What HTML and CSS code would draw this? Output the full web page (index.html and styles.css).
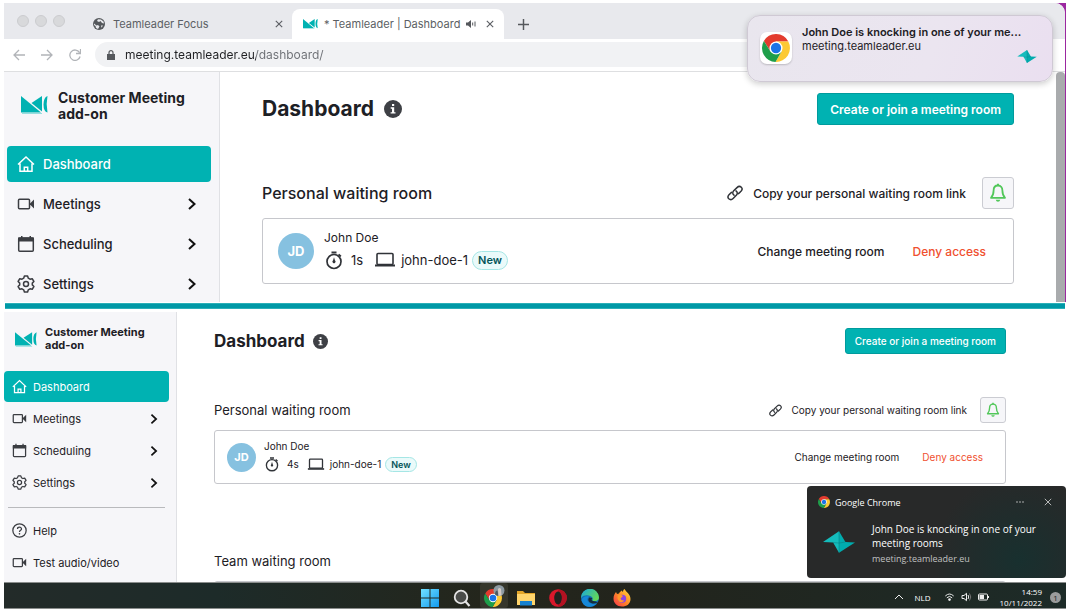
FILE: index.html
```html
<!DOCTYPE html>
<html lang="en">
<head>
<meta charset="utf-8">
<title>Teamleader | Dashboard</title>
<link rel="stylesheet" href="styles.css">
</head>
<body>
<svg class="sprite" aria-hidden="true">
  <symbol id="logo" viewBox="0 0 27 18">
    <path d="M0 0 20 16.500H0Z" fill="#00b2b2"/><path d="M10.500 7 21 0V15.500Z" fill="#00b2b2"/>
    <path d="M1 17.500H21" stroke="#7fd8d8" stroke-width=".8"/>
    <path d="M26.500 0Q24.800 8.500 26.500 16.500Q22.500 15.500 22.500 8.500Q22.500 1.500 26.500 0Z" fill="#00b2b2"/>
  </symbol>
  <symbol id="home" viewBox="0 0 18 18">
    <path d="M1 9.500 9 2l8 7.500M3 8.500V16.300H15V8.500M7.300 16V12.200H10.700V16" fill="none" stroke="currentColor" stroke-width="1.500"/>
  </symbol>
  <symbol id="camera" viewBox="0 0 18 18">
    <rect x="1.500" y="4.200" width="11" height="9.600" rx="1" fill="none" stroke="currentColor" stroke-width="1.500"/>
    <path d="M13 8.500 17 4.600V13.400L13 9.500Z" fill="currentColor"/>
  </symbol>
  <symbol id="calendar" viewBox="0 0 18 18">
    <rect x="1.700" y="3" width="14.600" height="13.200" rx="1" fill="none" stroke="currentColor" stroke-width="1.500"/>
    <path d="M1 2.500H17V6.500H1ZM4 1H5.500V3H4ZM12.500 1H14V3H12.500Z" fill="currentColor"/>
  </symbol>
  <symbol id="gear" viewBox="0 0 18 18">
    <path d="M7.400 1H10.600L11.300 3.200 13 4.200 15.200 3.700 16.900 6.500 15.300 8.100V9.900L16.900 11.500 15.200 14.300 13 13.800 11.300 14.800 10.600 17H7.400L6.700 14.800 5 13.800 2.800 14.300 1.100 11.500 2.700 9.900V8.100L1.100 6.500 2.800 3.700 5 4.200 6.700 3.200Z" fill="none" stroke="currentColor" stroke-width="1.500" stroke-linejoin="round"/>
    <circle cx="9" cy="9" r="2.500" fill="none" stroke="currentColor" stroke-width="1.500"/>
  </symbol>
  <symbol id="help" viewBox="0 0 18 18">
    <circle cx="9" cy="9" r="8" fill="none" stroke="currentColor" stroke-width="1.500"/>
    <path d="M6.600 7.200C6.600 4.300 11.400 4.400 11.400 7.100 11.400 8.900 9 8.800 9 10.800" fill="none" stroke="currentColor" stroke-width="1.500"/>
    <circle cx="9" cy="13" r="1" fill="currentColor"/>
  </symbol>
  <symbol id="chevron" viewBox="0 0 10 14"><path d="M2 2 7.500 7 2 12" fill="none" stroke="#111" stroke-width="2"/></symbol>
  <symbol id="info" viewBox="0 0 18 18">
    <circle cx="9" cy="9" r="9" fill="#3e4045"/><path d="M6.700 7.300H10.200V12.200H11.500V13.600H6.600V12.200H8V8.700H6.700ZM8 4H10.200V6H8Z" fill="#fff"/>
  </symbol>
  <symbol id="link" viewBox="0 0 16 16">
    <g fill="none" stroke="#303338" stroke-width="1.500" stroke-linecap="round">
      <path d="M7 10.200C5.300 9 5.500 7 6.700 5.800L10 2.600C11.500 1.100 13.400 1.400 14.300 2.300 15.300 3.300 15.300 5 14 6.300L11.500 8.600"/>
      <path d="M9 5.900C10.700 7.200 10.600 9 9.300 10.300L6.100 13.500C4.600 15 2.800 14.600 1.800 13.700 .8 12.700 .8 11 2 9.700L4.500 7.400"/>
    </g>
  </symbol>
  <symbol id="bell" viewBox="0 0 18 20">
    <path d="M9 2.500C6 2.500 4.600 4.700 4.600 7.500 4.600 11.500 3.500 13.200 2 14.800H16C14.500 13.200 13.400 11.500 13.400 7.500 13.400 4.700 12 2.500 9 2.500Z" fill="none" stroke="#52c75a" stroke-width="1.800" stroke-linejoin="round"/>
    <path d="M8 .8H10V3H8ZM6.700 16.800H11.300Q10.800 18.800 9 18.800T6.700 16.800Z" fill="#52c75a"/>
  </symbol>
  <symbol id="timer" viewBox="0 0 18 20">
    <circle cx="9" cy="11.500" r="7" fill="none" stroke="#303338" stroke-width="1.700"/>
    <path d="M6.500 1.500H11.500V3.500H6.500ZM14.200 3.700 16.500 5.800 15.400 7 13 4.900ZM9 7.200 10 10.500A1.500 1.500 0 1 1 8 10.500Z" fill="#303338"/>
  </symbol>
  <symbol id="laptop" viewBox="0 0 22 16">
    <rect x="3" y="1.500" width="16" height="11" rx="1" fill="none" stroke="#303338" stroke-width="1.600"/>
    <path d="M1 12.500H21V14.500H1Z" fill="#303338"/>
  </symbol>
  <symbol id="close" viewBox="0 0 10 10"><path d="M1 1 9 9M9 1 1 9" stroke="currentColor" stroke-width="1.400" fill="none"/></symbol>
  <symbol id="chrome" viewBox="0 0 30 30">
    <path d="M15 8H28.200A15 15 0 0 0 2.010 7.500L9 18.500Z" fill="#e33b2e"/>
    <path d="M21 18.500 14.500 30A15 15 0 0 0 28.200 8H15Z" fill="#fcc934"/>
    <path d="M9 18.500 2.010 7.500A15 15 0 0 0 14.500 30L21 18.500Z" fill="#1e9e4a"/>
    <circle cx="15" cy="15" r="7" fill="#fff"/><circle cx="15" cy="15" r="5.500" fill="#1a73e8"/>
  </symbol>
  <symbol id="bird" viewBox="0 0 30 20">
    <path d="M0 10 15 0V20L9.500 10.500Z" fill="#14bcbc"/><path d="M15 0 21 10 30 10.500 15 20Z" fill="#00acae"/>
    <path d="M9.500 10.500 15 11 21 10M15 0V20" stroke="#087f83" stroke-width=".5" fill="none"/>
  </symbol>
</svg>

<section class="mac">
  <div class="browser">
    <div class="tabs">
      <div class="lights"><i></i><i></i><i></i></div>
      <div class="tab">
        <svg class="favicon" viewBox="0 0 12 12"><circle cx="6" cy="6" r="6" fill="#55585c"/><path d="M1 5.500 3.500 7.500 5 7 6.500 8.500 5 11 3 10 2.500 8 1 7ZM5 1.200 4 3 6 4 7.500 3 9 5 11 5.500 10.500 3.500 8 1.500ZM8 7.500H10L8.500 9.800Z" fill="#e8e9ed"/></svg>
        <span class="tab-name">Teamleader Focus</span>
        <button class="plain" aria-label="Close tab"><svg class="x"><use href="#close"/></svg></button>
      </div>
      <div class="tab tab-active">
        <svg class="tab-logo"><use href="#logo"/></svg>
        <span class="tab-name">* Teamleader | Dashboard</span>
        <svg class="sound" viewBox="0 0 10 10"><path d="M0 3.500H2L5 1V9L2 6.500H0Z" fill="#55585c"/><path d="M6.700 3.500V6.500M9 2.500V7.500" stroke="#55585c"/></svg>
        <button class="plain" aria-label="Close tab"><svg class="x"><use href="#close"/></svg></button>
      </div>
      <button class="plain new-tab" aria-label="New tab"><svg viewBox="0 0 12 12"><path d="M6 0V12M0 6H12" stroke="#55585c" stroke-width="1.600"/></svg></button>
    </div>
    <div class="toolbar">
      <button class="plain" aria-label="Back"><svg class="nav-arrow" viewBox="0 0 12 12"><path d="M12 6H1M6 1 1 6 6 11" fill="none" stroke="#b1b4b8" stroke-width="1.300"/></svg></button>
      <button class="plain" aria-label="Forward"><svg class="nav-arrow" viewBox="0 0 12 12"><path d="M0 6H11M6 1 11 6 6 11" fill="none" stroke="#b1b4b8" stroke-width="1.300"/></svg></button>
      <button class="plain" aria-label="Reload"><svg class="nav-arrow" viewBox="0 0 12 12"><path d="M10.500 3.500A5.200 5.200 0 1 0 11.100 7.500M11.500 0V4.500H7" fill="none" stroke="#b1b4b8" stroke-width="1.300"/></svg></button>
      <label class="address">
        <svg class="lock" viewBox="0 0 8 10"><path d="M0 4H8V10H0Z" fill="#55585c"/><path d="M2 4.500V2.700A2 2 0 0 1 6 2.700V4.500" fill="none" stroke="#55585c" stroke-width="1.200"/></svg>
        <input type="text" aria-label="Address" value="meeting.teamleader.eu/dashboard/">
      </label>
    </div>
    <div class="app">
      <aside class="sidebar">
        <div class="brand"><svg class="logo"><use href="#logo"/></svg><span>Customer Meeting<br>add-on</span></div>
        <nav>
          <a class="item current" href="#"><svg class="ico"><use href="#home"/></svg>Dashboard</a>
          <a class="item" href="#"><svg class="ico"><use href="#camera"/></svg>Meetings<svg class="chev"><use href="#chevron"/></svg></a>
          <a class="item" href="#"><svg class="ico"><use href="#calendar"/></svg>Scheduling<svg class="chev"><use href="#chevron"/></svg></a>
          <a class="item" href="#"><svg class="ico"><use href="#gear"/></svg>Settings<svg class="chev"><use href="#chevron"/></svg></a>
        </nav>
      </aside>
      <main class="content">
        <header class="head"><h1>Dashboard</h1><svg class="info"><use href="#info"/></svg><button class="primary">Create or join a meeting room</button></header>
        <div class="subhead"><h2>Personal waiting room</h2>
          <button class="plain copy"><svg class="link"><use href="#link"/></svg>Copy your personal waiting room link</button>
          <button class="bell" aria-label="Notifications"><svg><use href="#bell"/></svg></button>
        </div>
        <article class="guest">
          <span class="avatar">JD</span>
          <div class="who">
            <div class="name">John Doe</div>
            <div class="meta"><svg class="timer"><use href="#timer"/></svg><span class="secs">1s</span><svg class="laptop"><use href="#laptop"/></svg><span>john-doe-1</span><span class="badge">New</span></div>
          </div>
          <button class="plain change">Change meeting room</button>
          <button class="plain deny">Deny access</button>
        </article>
      </main>
      <div class="scrollbar"></div>
    </div>
  </div>
  <div class="mac-toast">
    <span class="chrome-tile"><svg><use href="#chrome"/></svg></span>
    <div class="mac-text"><strong>John Doe is knocking in one of your me...</strong><span>meeting.teamleader.eu</span></div>
    <svg class="mac-bird"><use href="#bird"/></svg>
  </div>
</section>

<hr class="split">

<section class="win">
  <div class="app">
    <aside class="sidebar">
      <div class="brand"><svg class="logo"><use href="#logo"/></svg><span>Customer Meeting<br>add-on</span></div>
      <nav>
        <a class="item current" href="#"><svg class="ico"><use href="#home"/></svg>Dashboard</a>
        <a class="item" href="#"><svg class="ico"><use href="#camera"/></svg>Meetings<svg class="chev"><use href="#chevron"/></svg></a>
        <a class="item" href="#"><svg class="ico"><use href="#calendar"/></svg>Scheduling<svg class="chev"><use href="#chevron"/></svg></a>
        <a class="item" href="#"><svg class="ico"><use href="#gear"/></svg>Settings<svg class="chev"><use href="#chevron"/></svg></a>
        <hr class="rule">
        <a class="item" href="#"><svg class="ico"><use href="#help"/></svg>Help</a>
        <a class="item" href="#"><svg class="ico"><use href="#camera"/></svg>Test audio/video</a>
      </nav>
    </aside>
    <main class="content">
      <header class="head"><h1>Dashboard</h1><svg class="info"><use href="#info"/></svg><button class="primary">Create or join a meeting room</button></header>
      <div class="subhead"><h2>Personal waiting room</h2>
        <button class="plain copy"><svg class="link"><use href="#link"/></svg>Copy your personal waiting room link</button>
        <button class="bell" aria-label="Notifications"><svg><use href="#bell"/></svg></button>
      </div>
      <article class="guest">
        <span class="avatar">JD</span>
        <div class="who">
          <div class="name">John Doe</div>
          <div class="meta"><svg class="timer"><use href="#timer"/></svg><span class="secs">4s</span><svg class="laptop"><use href="#laptop"/></svg><span>john-doe-1</span><span class="badge">New</span></div>
        </div>
        <button class="plain change">Change meeting room</button>
        <button class="plain deny">Deny access</button>
      </article>
      <h2 class="team">Team waiting room</h2>
      <div class="team-list"></div>
    </main>
  </div>
  <div class="win-toast">
    <div class="toast-bar"><svg class="tiny-chrome"><use href="#chrome"/></svg><span>Google Chrome</span>
      <button class="plain more" aria-label="More"><svg viewBox="0 0 8 2"><circle cx="1" cy="1" r=".7"/><circle cx="4" cy="1" r=".7"/><circle cx="7" cy="1" r=".7"/></svg></button>
      <button class="plain dismiss" aria-label="Dismiss"><svg class="thin" viewBox="0 0 10 10"><path d="M1 1 9 9M9 1 1 9" stroke="currentColor"/></svg></button></div>
    <div class="toast-body"><svg class="big-bird"><use href="#bird"/></svg>
      <div><p>John Doe is knocking in one of your meeting rooms</p><small>meeting.teamleader.eu</small></div></div>
  </div>
  <footer class="taskbar">
    <div class="apps">
      <button class="plain" aria-label="Start"><svg viewBox="0 0 18 18"><defs><linearGradient id="w" x2="1" y2="1"><stop stop-color="#72e0ff"/><stop offset="1" stop-color="#129bf0"/></linearGradient></defs><path d="M0 0H8.500V8.500H0ZM9.500 0H18V8.500H9.500ZM0 9.500H8.500V18H0ZM9.500 9.500H18V18H9.500Z" fill="url(#w)"/></svg></button>
      <button class="plain" aria-label="Search"><svg viewBox="0 0 18 18"><circle cx="8" cy="8" r="6.300" fill="#4a4c49" stroke="#e4e4e4" stroke-width="1.800"/><path d="M12.500 12.500 16.500 17" stroke="#e4e4e4" stroke-width="2.200"/></svg></button>
      <button class="plain lit" aria-label="Chrome"><svg viewBox="0 0 22 22"><use href="#chrome" x="1" y="4" width="18" height="18"/><circle cx="16" cy="5.500" r="5.500" fill="#8d9aa2"/><path d="M12 9.300Q12 5.500 14.500 5.500L15.500 10.900Q13.500 10.800 12 9.300Z" fill="#4d5963"/><path d="M15 4Q16.500 1.800 18 4L18.500 10Q17 11 15.500 10.900Z" fill="#d3cbc4"/></svg></button>
      <button class="plain" aria-label="Files"><svg viewBox="0 0 18 18"><path d="M0 2H6L8 4H18V9H0Z" fill="#e3a629"/><path d="M0 5H18V16H0Z" fill="#ffd56c"/><path d="M3 12H15V16.500H3Z" fill="#1681cf"/></svg></button>
      <button class="plain" aria-label="Opera"><svg viewBox="0 0 18 18"><circle cx="9" cy="9" r="8.800" fill="#d9182b"/><path d="M9 .2A8.800 8.800 0 0 1 9 17.800Z" fill="#b31222"/><ellipse cx="9" cy="9" rx="3.800" ry="6.500" fill="#20221f"/></svg></button>
      <button class="plain" aria-label="Edge"><svg viewBox="0 0 18 18"><defs><linearGradient id="e" x2="1" y2=".5"><stop stop-color="#16a8e0"/><stop offset="1" stop-color="#62d65a"/></linearGradient></defs><circle cx="9" cy="9" r="9" fill="#1170b8"/><path d="M0 9A9 9 0 0 1 18 8.500C18 11.500 15 12.500 12 12 10.500 11.500 12.300 10.500 11.500 8.800 10 6 3 5 0 9Z" fill="url(#e)"/><path d="M6.500 9.500C5.500 13 10 16 15.500 14 12 20 2 19 .5 11 1.500 7.500 5 6.500 8 7.500Z" fill="#1688d8"/><path d="M8 8.500Q6 12 10 14 14 15.500 16.500 13.300 15 12.500 12 12 9.500 11 11.300 9Z" fill="#172d3c"/></svg></button>
      <button class="plain" aria-label="Firefox"><svg viewBox="0 0 18 18"><defs><linearGradient id="f" x1="1" x2="0" y2="1"><stop stop-color="#ffdf3c"/><stop offset=".5" stop-color="#ff8a26"/><stop offset="1" stop-color="#f5304f"/></linearGradient></defs><path d="M9 17.500C4 17.500.5 14 .5 9.500.5 6.500 1.800 4.500 3 3L4 5 6 4.500C6.500 3 8 2.500 8.500 1.500L10 3C10 1.500 10.500.5 11.500 0 13 3 17.500 5 17.500 10S13.500 17.500 9 17.500Z" fill="url(#f)"/><circle cx="9.200" cy="9.800" r="4" fill="#8b45e0"/><path d="M4.500 6.500Q7 5 10 7L7.500 9.500Q8 12 11.500 11.500 9 14.500 6 12.500 4 10.500 4.500 6.500Z" fill="#ff9a2b"/></svg></button>
    </div>
    <div class="tray">
      <svg class="up" viewBox="0 0 10 6"><path d="M1 5 5 1 9 5" fill="none" stroke="#eee"/></svg>
      <span class="lang">NLD</span>
      <svg class="tray-ico" viewBox="0 0 10 10"><path d="M.8 4Q5 0 9.200 4M2.300 5.800Q5 3 7.700 5.800" fill="none" stroke="#eee"/><circle cx="5" cy="7.600" r="1.300" fill="#eee"/></svg>
      <svg class="tray-ico" viewBox="0 0 10 10"><path d="M.5 3.500H2.500L5 1.300V8.700L2.500 6.500H.5Z" fill="none" stroke="#eee"/><path d="M6.500 3Q8 5 6.500 7" fill="none" stroke="#eee"/><path d="M8 1.500Q10.500 5 8 8.500" fill="none" stroke="#777"/></svg>
      <svg class="tray-ico" viewBox="0 0 11 10"><rect x=".5" y="2" width="9" height="6" rx="1" fill="none" stroke="#eee"/><path d="M1.500 3H6V7H1.500ZM10 4H11V6H10Z" fill="#eee"/></svg>
      <span class="clock">14:59<br>10/11/2022</span>
      <span class="count">1</span>
    </div>
  </footer>
</section>
</body>
</html>
```
FILE: styles.css
```css
* { box-sizing: border-box; }
body { margin: 0; padding: 3px 3px 2px 4px; background: #fff; color: #1d2025; font-family: Inter, "Liberation Sans", sans-serif; }
svg { display: block; flex: none; }
.sprite { position: absolute; width: 0; height: 0; }
h1, h2, p { margin: 0; }
a { color: inherit; text-decoration: none; }
button, input { font: inherit; color: inherit; }
.plain { padding: 0; border: 0; background: none; white-space: nowrap; }

/* sizes of the two screens */
.mac {
  --side: 216px; --nav-pad: 3px; --nav-right: 8px; --row: 36px; --row-gap: 4px; --nav-text: 13px; --text: 12px; --ico: 18px; --ico-pad: 10px; --ico-gap: 8px; --chev-right: 14px; --chev: 14px;
  --brand: 14px; --brand-line: 16px; --logo: 27px; --brand-pad: 18px 0 0 17px; --brand-height: 74px;
  --h1: 21px; --h2: 16px; --main-pad: 21px 42px 0 42px; --info: 18px;
  --btn: 32px; --btn-pad: 12px; --sub-top: 52px; --card-gap: 9px; --card: 66px; --card-pad: 0 27px 0 15px;
  --avatar: 36px; --name: 12px; --meta: 13px; --name-line: 22px; --badge: 11px; --link: 16px; --action-gap: 28px; --weight: 500;
}
.win {
  --side: 173px; --nav-pad: 0; --nav-right: 7px; --row: 31px; --row-gap: 1px; --nav-text: 11px; --text: 10px; --ico: 15px; --ico-pad: 8px; --ico-gap: 6px; --chev-right: 10px; --chev: 12px;
  --brand: 11px; --brand-line: 13px; --logo: 22px; --brand-pad: 14px 0 0 11px; --brand-height: 59px;
  --h1: 17px; --h2: 13px; --main-pad: 16px 60px 0 37px; --info: 15px;
  --btn: 26px; --btn-pad: 9px; --sub-top: 43px; --card-gap: 7px; --card: 54px; --card-pad: 0 22px 0 12px;
  --avatar: 29px; --name: 10px; --meta: 10px; --name-line: 18px; --badge: 9px; --link: 13px; --action-gap: 23px; --weight: 400;
}

.mac { position: relative; padding-right: 1px; background: #9b27a0; }
.browser { overflow: hidden; background: #fff; border-radius: 0 10px 0 0; }
.tabs { display: flex; height: 36px; padding-left: 13px; background: #e8e9ed; }
.lights { display: flex; gap: 6px; width: 75px; padding-top: 12px; }
.lights i { width: 12px; height: 12px; border: 1px solid #cbcccf; border-radius: 50%; background: #d8d9db; }
.tab { display: flex; align-items: center; width: 200px; margin-top: 6px; padding: 0 9px 0 1px; color: #5c5f64; font-size: 11px; }
.tab-name { margin: 0 auto 0 8px; white-space: nowrap; }
.tab-active { width: 212px; padding: 0 10px 0 11px; border-radius: 8px 8px 0 0; background: #fff; }
.favicon { width: 12px; height: 12px; }
.tab-logo { width: 15px; height: 10px; }
.tab-active .tab-name { margin-left: 6px; }
.sound { width: 10px; height: 10px; margin-right: 10px; }
.x { width: 8px; height: 8px; }
.new-tab { padding: 6px 14px 0; }
.new-tab svg { width: 11px; height: 11px; }
.toolbar { display: flex; align-items: center; gap: 16px; height: 33px; padding: 0 12px 1px 9px; border-bottom: 1px solid #dedfe1; background: #fff; }
.nav-arrow { width: 12px; height: 12px; }
.address { display: flex; flex: 1; align-items: center; gap: 10px; height: 25px; margin-left: -2px; padding-left: 12px; border-radius: 13px; background: #f1f2f4; }
.lock { width: 8px; height: 10px; }
.address input { flex: 1; min-width: 0; padding: 0; border: 0; font-size: 12px; color: transparent; background: linear-gradient(90deg, #202124 131px, #6c6f74 131px) text; }

.app { display: flex; align-items: stretch; background: #fff; }
.mac .app { height: 230px; }
.win .app { height: 270px; overflow: hidden; }
.sidebar { flex: none; width: var(--side); border-right: 1px solid #e0e1e5; background: #f6f6f9; }
.brand { display: flex; gap: 10px; height: var(--brand-height); padding: var(--brand-pad); font-size: var(--brand); font-weight: 700; line-height: var(--brand-line); white-space: nowrap; }
.win .brand { gap: 8px; }
.logo { width: var(--logo); height: 18px; margin-top: 6px; }
.win .logo { height: 15px; }
nav { display: flex; flex-direction: column; gap: var(--row-gap); padding: 0 var(--nav-right) 0 var(--nav-pad); }
.item { display: flex; align-items: center; gap: var(--ico-gap); height: var(--row); padding-left: var(--ico-pad); border-radius: 4px; font-size: var(--nav-text); font-weight: var(--weight); }
.current { background: #00b2b2; color: #fff; }
.ico { width: var(--ico); height: var(--ico); }
.item:not(.current) .ico { color: #3b3d42; }
.chev { width: 10px; height: var(--chev); margin: 0 var(--chev-right) 0 auto; }
.rule { width: 157px; margin: 8px 0 6px 4px; border: 0; border-top: 1px solid #b9babd; }

.content { flex: 1; min-width: 0; padding: var(--main-pad); }
.head, .subhead { display: flex; align-items: center; }
h1 { margin-right: 10px; font-size: var(--h1); line-height: var(--btn); }
.win h1 { margin-right: 8px; }
.info { width: var(--info); height: var(--info); }
.primary { height: var(--btn); margin-left: auto; padding: 0 var(--btn-pad); border: 1px solid #009b9d; border-radius: 3px; background: #00b2b2; color: #fff; font-size: var(--text); font-weight: 600; white-space: nowrap; }
.win .primary { font-weight: 500; }
.subhead { margin: var(--sub-top) 0 var(--card-gap); }
h2 { font-size: var(--h2); font-weight: var(--weight); }
.copy { display: flex; align-items: center; gap: 10px; margin-left: auto; font-size: var(--text); font-weight: var(--weight); }
.link { width: var(--link); height: var(--link); }
.bell { display: grid; place-items: center; width: var(--btn); height: var(--btn); margin-left: 16px; padding: 0; border: 1px solid #cbccd2; border-radius: 3px; background: #f6f6f9; }
.win .bell { margin-left: 13px; }
.bell svg { width: 18px; height: 20px; }
.win .bell svg { width: 14px; height: 16px; }
.guest { display: flex; align-items: center; height: var(--card); padding: var(--card-pad); border: 1px solid #c6c7cc; border-radius: 3px; background: #fff; }
.avatar { display: grid; place-items: center; width: var(--avatar); height: var(--avatar); margin-right: 10px; border-radius: 50%; background: #86c1e0; color: #fff; font-size: var(--nav-text); font-weight: 700; }
.who { margin-right: auto; padding-bottom: 4px; line-height: var(--name-line); }
.name { font-size: var(--name); }
.meta { display: flex; align-items: center; font-size: var(--meta); }
.win .avatar { margin-right: 8px; }
.timer { width: 20px; height: 20px; }
.laptop { width: 22px; height: 16px; margin: 0 5px 0 11px; }
.secs { margin-left: 7px; }
.badge { margin-left: 4px; padding: 0 5px; border: 1px solid #a5e6e5; border-radius: 10px; background: #eafafa; color: #045458; font-size: var(--badge); font-weight: 600; line-height: 17px; }
.win .badge { line-height: 13px; }
.win .timer { width: 16px; height: 16px; }
.win .laptop { width: 18px; height: 13px; margin-left: 8px; }
.change { margin-right: var(--action-gap); font-size: var(--text); font-weight: var(--weight); }
.deny { color: #f0502f; font-size: var(--text); font-weight: var(--weight); }
.team { margin-top: 69px; line-height: 17px; }
.team-list { height: 40px; margin-top: 11px; border: 1px solid #c6c7cc; border-radius: 3px; }
.scrollbar { width: 9px; border-radius: 4px 4px 0 0; background: #a9abad; }
.split { height: 6px; margin: 1px 1px 3px; border: solid #2bb0b8; border-width: 1px 0; background: #0098a6; }

.mac-toast { position: absolute; top: 12px; right: 13px; display: flex; width: 306px; height: 67px; padding: 9px 15px 0 12px; border: 1px solid #cfc9d4; border-radius: 13px; background: linear-gradient(110deg, #e9e6ee, #ebe5f0 60%, #eadff0); box-shadow: 0 2px 6px #0003; }
.chrome-tile { display: grid; flex: none; place-items: center; width: 32px; height: 32px; margin-top: 7px; border-radius: 7px; background: #fff; box-shadow: 0 1px 2px #0003; }
.chrome-tile svg { width: 28px; height: 28px; }
.mac-text { display: flex; flex: 1; flex-direction: column; margin-left: 10px; font-size: 11px; line-height: 14px; white-space: nowrap; }
.mac-text strong { font-weight: 600; }
.mac-bird { width: 20px; height: 13px; margin: 25px 0 0 -20px; }

.win { position: relative; }
.taskbar { display: grid; grid-template-columns: minmax(0, 1fr) auto minmax(0, 1fr); height: 27px; border: 1px solid #8a8d8c; border-width: 1px 0; background: linear-gradient(90deg, #232b29, #1d2b29 20%, #24261c 45%, #22241c 60%, #1d2b28); color: #fff; font-family: "Open Sans", "Noto Sans", sans-serif; }
.apps { display: flex; grid-column: 2; gap: 4px; margin-right: 18px; }
.apps .plain { display: grid; place-items: center; width: 28px; padding-top: 4px; }
.apps svg { width: 18px; height: 18px; }
.apps .lit { padding: 0; border-radius: 3px; background: #35362b; }
.apps .lit svg { width: 22px; height: 22px; }
.tray { display: flex; align-items: center; justify-content: flex-end; padding-top: 3px; font-size: 8px; }
.up { width: 10px; height: 6px; margin-right: 11px; }
.lang { margin-right: 13px; }
.tray-ico { width: 11px; height: 10px; margin-right: 6px; }
.clock { margin: 0 8px 0 5px; line-height: 11px; text-align: right; }
.count { width: 11px; height: 11px; margin-right: 5px; border-radius: 50%; background: #9b9c9c; color: #222; line-height: 11px; text-align: center; }
.win-toast { position: absolute; right: 0; bottom: 31px; width: 259px; height: 92px; border-radius: 4px; background: radial-gradient(circle at 82% 80%, #18302f, #28292900 38%), #282929; color: #fff; font-family: "Open Sans", "Noto Sans", sans-serif; }
.toast-bar { display: flex; align-items: center; height: 32px; padding: 0 14px 0 11px; font-size: 9px; }
.tiny-chrome { width: 12px; height: 12px; margin-right: 5px; }
.more { margin-left: auto; }
.more svg { width: 8px; height: 2px; fill: #ddd; }
.dismiss { margin-left: 20px; color: #ddd; }
.thin { width: 8px; height: 8px; }
.toast-body { display: flex; padding: 4px 27px 0 16px; }
.big-bird { width: 32px; height: 22px; margin: 9px 17px 0 0; }
.toast-body p { font-size: 10px; line-height: 14px; }
.toast-body small { display: block; margin-top: 2px; color: #c0c1c1; font-size: 9px; line-height: 14px; }
```
